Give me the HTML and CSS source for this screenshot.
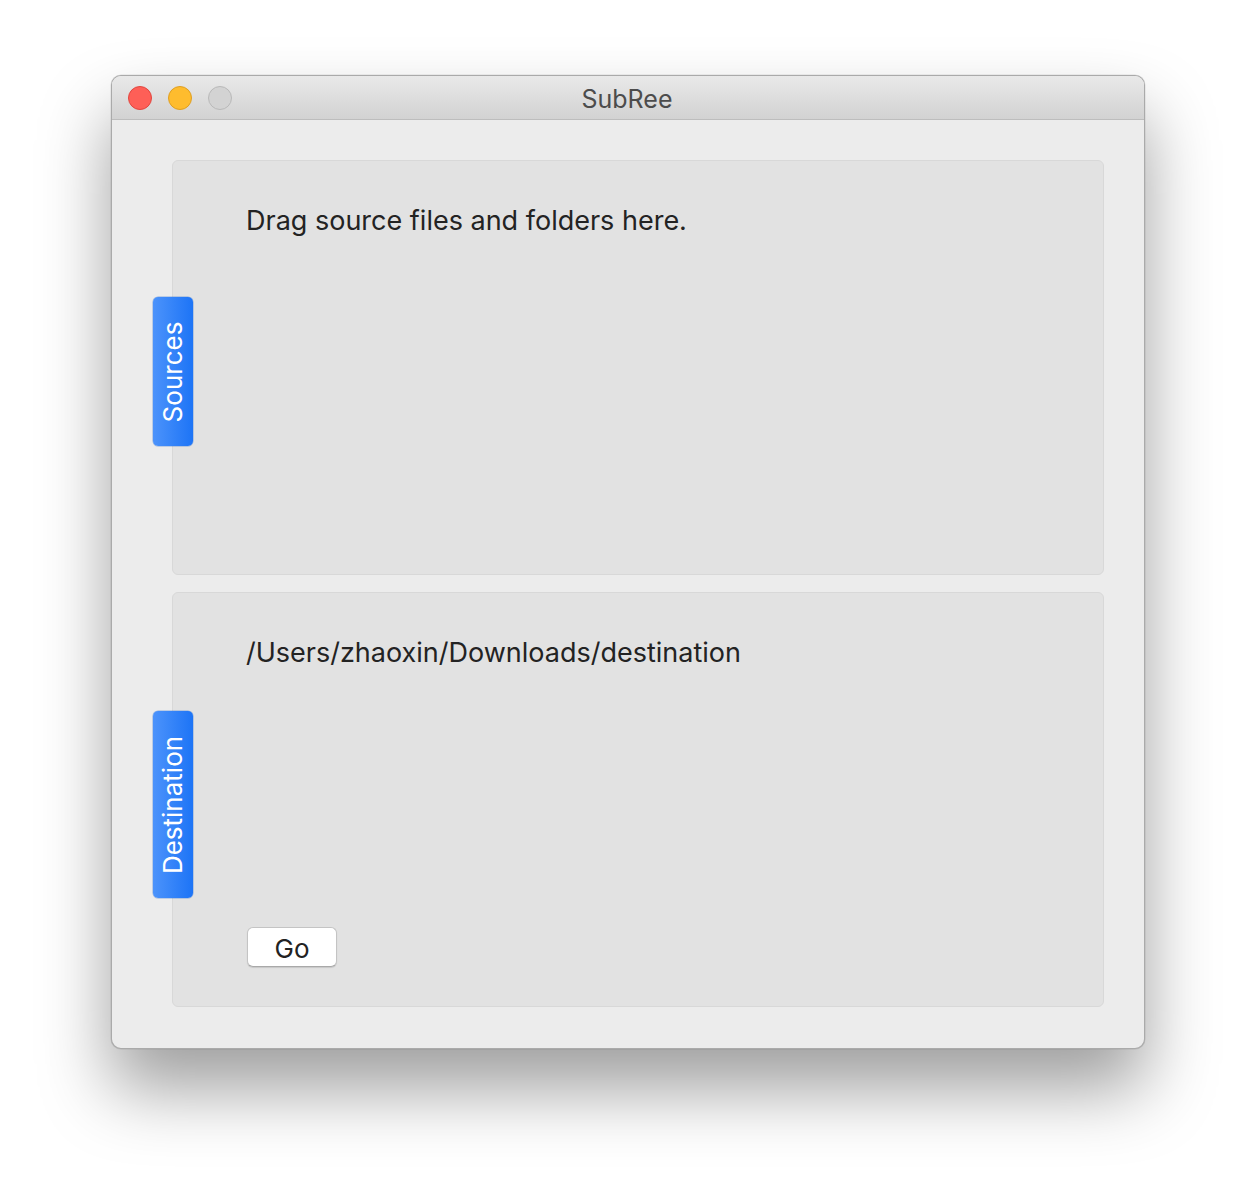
FILE: index.html
```html
<!DOCTYPE html>
<html>
<head>
<meta charset="utf-8">
<title>SubRee</title>
<link rel="stylesheet" href="styles.css">
</head>
<body>
<div class="window">
  <div class="titlebar">
    <div class="lights">
      <span class="light close"></span>
      <span class="light min"></span>
      <span class="light zoom"></span>
    </div>
    <div class="title">SubRee</div>
  </div>
  <div class="content">
    <section class="panel">
      <div class="tab"><span class="tab-label">Sources</span></div>
      <p class="panel-text">Drag source files and folders here.</p>
    </section>
    <section class="panel">
      <div class="tab tab-dest"><span class="tab-label">Destination</span></div>
      <p class="panel-text">/Users/zhaoxin/Downloads/destination</p>
      <button class="go">Go</button>
    </section>
  </div>
</div>
</body>
</html>
```

FILE: styles.css
```css
html, body {
  margin: 0;
  padding: 0;
  background: #ffffff;
}
body {
  width: 1256px;
  height: 1196px;
  overflow: hidden;
  font-family: Inter, "Liberation Sans", Arial, sans-serif;
}
.window {
  box-sizing: border-box;
  margin: 75px 0 0 111px;
  width: 1034px;
  height: 974px;
  border: 1px solid rgba(0, 0, 0, 0.28);
  border-radius: 10px;
  background: #ececec;
  box-shadow: 0 40px 70px rgba(0, 0, 0, 0.38), 0 0 0 0.5px rgba(0,0,0,0.1);
  display: flex;
  flex-direction: column;
  overflow: hidden;
}
.titlebar {
  position: relative;
  height: 43px;
  flex: none;
  background: linear-gradient(to bottom, #e9e9e9, #d2d2d2);
  border-bottom: 1px solid #bdbdbd;
  display: flex;
  align-items: center;
}
.lights {
  display: flex;
  gap: 16px;
  padding-left: 16px;
}
.light {
  box-sizing: border-box;
  width: 24px;
  height: 24px;
  border-radius: 50%;
  display: block;
}
.close { background: #fe5f57; border: 1px solid #e1463f; }
.min { background: #febc2e; border: 1px solid #df9f22; }
.zoom { background: #d3d3d3; border: 1px solid #b9b9b9; }
.title {
  position: absolute;
  left: 0;
  right: 0;
  top: 0;
  bottom: 0;
  display: flex;
  align-items: center;
  justify-content: center;
  font-size: 25px;
  color: #4c4c4c;
  padding-top: 2px;
  padding-right: 2px;
}
.content {
  flex: 1;
  display: flex;
  flex-direction: column;
  gap: 17px;
  padding: 40px 40px 40px 60px;
}
.panel {
  position: relative;
  box-sizing: border-box;
  height: 415px;
  background: #e2e2e2;
  border: 1px solid #d8d8d8;
  border-radius: 6px;
  display: flex;
  flex-direction: column;
  align-items: flex-start;
  padding: 0 0 0 73px;
}
.panel-text {
  margin: 41px 0 0 0;
  font-size: 27px;
  line-height: 38px;
  color: #232323;
}
.tab {
  position: absolute;
  left: -20px;
  top: 136px;
  width: 40px;
  height: 149px;
  border-radius: 5px;
  background: linear-gradient(to right, #4c93fb, #1d74f6);
  box-shadow: 0 0 0 0.5px rgba(0, 80, 200, 0.4);
  display: flex;
  align-items: center;
  justify-content: center;
}
.tab-dest {
  top: 118px;
  height: 187px;
}
.tab-label {
  transform: rotate(-90deg);
  white-space: nowrap;
  color: #ffffff;
  font-size: 26px;
  line-height: 28px;
}
.go {
  margin: auto 0 39px 1px;
  width: 90px;
  height: 40px;
  box-sizing: border-box;
  background: #ffffff;
  border: 1px solid #c4c4c4;
  border-bottom-color: #a9a9a9;
  border-radius: 6px;
  box-shadow: 0 1px 1px rgba(0,0,0,0.12);
  font-family: Inter, "Liberation Sans", Arial, sans-serif;
  font-size: 26px;
  color: #222222;
  padding: 2px 0 0 0;
}
```
